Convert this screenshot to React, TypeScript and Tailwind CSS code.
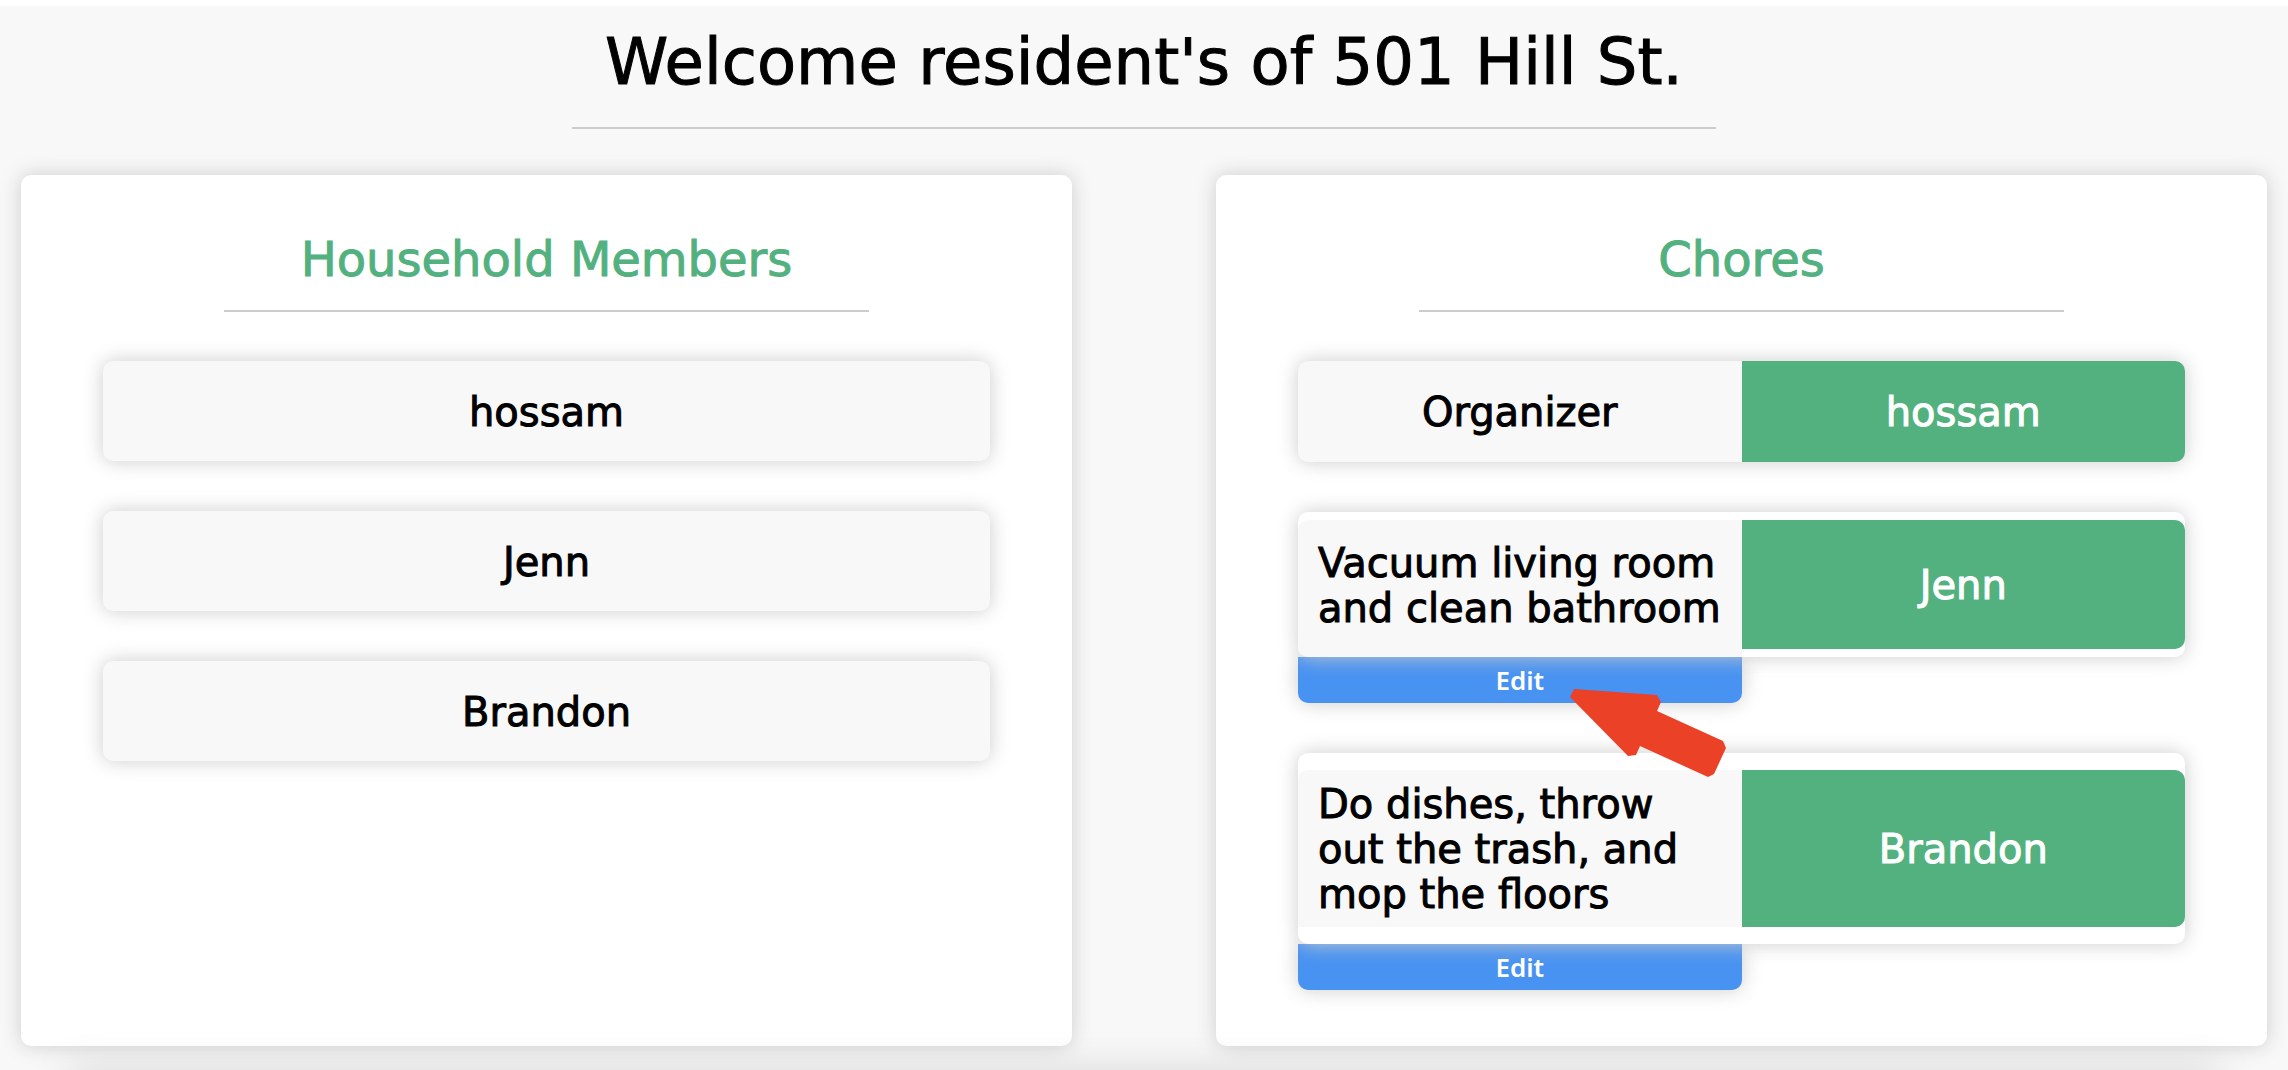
import type { ReactNode } from "react";

const members = ["hossam", "Jenn", "Brandon"];

function Panel({ title, children }: { title: string; children: ReactNode }) {
  return (
    <section className="flex flex-1 flex-col rounded-[10px] bg-white px-[82px] pt-[50px] pb-14 shadow-[0_0_20px_#cccccc]">
      <h2 className="text-center text-[48px] leading-[68px] text-[#52b17f]">{title}</h2>
      <hr className="mx-auto mt-[17px] mb-[49px] w-8/11 border-t-2 border-[#cccccc]" />
      <ul className="flex flex-col gap-[50px]">{children}</ul>
    </section>
  );
}

function Assignee({ name }: { name: string }) {
  return (
    <div className="flex items-center justify-center rounded-r-[10px] bg-[#52b17f] pt-0.5 text-white">{name}</div>
  );
}

function EditButton() {
  return (
    <button
      type="button"
      className="block w-full rounded-b-[10px] bg-[#4892f1] font-['Noto_Sans',sans-serif] text-[26px] leading-[46px] font-semibold text-white shadow-[0_0_20px_#cccccc] [-webkit-text-stroke:0]"
    >
      Edit
    </button>
  );
}

function PointerArrow() {
  return (
    <svg
      className="absolute top-[31px] right-4 z-20 h-[89px] w-[156px]"
      viewBox="0 0 156 89"
      aria-hidden="true"
    >
      <path fill="#eb4126" d="M4 1 L87 7 L91 14 L87 23 L153 53 L156 60 L144 86 L138 89 L70 58 L66 67 L58 68 L0 9 Z" />
    </svg>
  );
}

export default function App() {
  return (
    <div className="min-h-screen overflow-hidden border-t-[6px] border-white bg-[#f8f8f8] font-['Lucida_Grande','DejaVu_Sans',sans-serif] text-[40px] leading-[45px] text-black [-webkit-text-stroke:1px]">
      <header className="pt-3">
        <h1 className="text-center text-[64px] leading-[88px]">Welcome resident's of 501 Hill St.</h1>
        <hr className="mx-auto mt-[21px] mb-[46px] w-1/2 border-t-2 border-[#cccccc]" />
      </header>
      <main className="flex gap-36 px-[21px] pb-6">
        <Panel title="Household Members">
          {members.map((name) => (
            <li key={name} className="rounded-[10px] bg-[#f8f8f8] pt-[29px] pb-[26px] text-center shadow-[0_0_20px_#cccccc]">
              {name}
            </li>
          ))}
        </Panel>
        <Panel title="Chores">
          <li className="grid grid-cols-2 rounded-[10px] bg-[#f8f8f8] shadow-[0_0_20px_#cccccc]">
            <div className="pt-[29px] pb-[27px] text-center">Organizer</div>
            <Assignee name="hossam" />
          </li>
          <li>
            <div className="relative z-10 grid grid-cols-2 rounded-[10px] bg-white shadow-[0_0_20px_#cccccc]">
              <div className="mt-2 rounded-l-[10px] bg-[#f8f8f8] px-5 pt-[21px] pb-[26px]">
                Vacuum living room and clean bathroom
              </div>
              <div className="grid py-2">
                <Assignee name="Jenn" />
              </div>
            </div>
            <div className="relative w-1/2">
              <EditButton />
              <PointerArrow />
            </div>
          </li>
          <li>
            <div className="relative z-10 grid grid-cols-2 rounded-[10px] bg-white py-[17px] shadow-[0_0_20px_#cccccc]">
              <div className="rounded-tl-[10px] bg-[#f8f8f8] px-5 pt-3 pb-2.5">
                Do dishes, throw out the trash, and mop the floors
              </div>
              <Assignee name="Brandon" />
            </div>
            <div className="w-1/2">
              <EditButton />
            </div>
          </li>
        </Panel>
      </main>
      <footer className="relative z-30 mx-[100px] shadow-[0_30px_40px_32px_rgba(0,0,0,0.12)]" />
    </div>
  );
}
